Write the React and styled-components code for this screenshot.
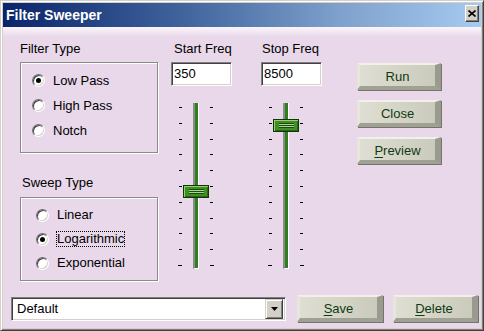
import React from "react";
import styled, { createGlobalStyle } from "styled-components";

const GlobalStyle = createGlobalStyle`
  html, body { margin: 0; padding: 0; }
  body {
    width: 484px; height: 331px; overflow: hidden;
    font-family: "Liberation Sans", Arial, sans-serif;
    font-size: 13px; color: #000;
  }
  * { box-sizing: border-box; }
`;

const Window = styled.div`
  width: 484px; height: 331px;
  display: flex; flex-direction: column;
  background: #d4d0c8;
  border: 1px solid; border-color: #d4d0c8 #404040 #404040 #d4d0c8;
  box-shadow: inset 1px 1px 0 #ffffff, inset -1px -1px 0 #808080;
  padding: 2px;
`;

const TitleBar = styled.div`
  height: 24px; flex: none;
  display: flex; align-items: flex-start;
  padding: 0 2px 0 3px;
  background: linear-gradient(90deg, #0a246a 0%, #4468a0 40%, #7ea0cc 70%, #a6caf0 100%);
`;

const TitleText = styled.div`
  font-family: "Liberation Sans", Arial, sans-serif;
  font-weight: bold; font-size: 14px; line-height: 24px; color: #fff;
`;

const CloseButton = styled.div`
  margin-left: auto; margin-top: 2px;
  width: 14px; height: 17px;
  display: flex; align-items: center; justify-content: center;
  background: #d4d0c8;
  border: 1px solid; border-color: #ffffff #404040 #404040 #ffffff;
  box-shadow: inset -1px -1px 0 #808080;
`;

const Body = styled.div`
  flex: 1; display: flex; flex-direction: column;
  background: linear-gradient(180deg, #fbf6fb 0px, #e8d8ea 10px, #e8d8ea 100%);
  padding: 14px 3px 6px 8px;
`;

const TopRow = styled.div`
  display: flex; align-items: flex-start; margin-left: 9px;
`;

const LeftCol = styled.div`
  width: 138px; display: flex; flex-direction: column;
`;

const Label = styled.div`
  font-size: 13px; line-height: 15px; height: 15px; white-space: nowrap;
  margin-left: ${p => p.$indent || 0}px;
  margin-top: ${p => p.$top || 0}px;
`;

const GroupBox = styled.div`
  margin-top: ${p => p.$top}px;
  height: ${p => p.$h}px;
  border: 1px solid #8c8a8c;
  box-shadow: inset 1px 1px 0 #ffffff, 1px 1px 0 #ffffff;
  padding: 5px 0 0 ${p => p.$pad}px;
  display: flex; flex-direction: column;
`;

const RadioRow = styled.div`
  height: ${p => p.$h}px; display: flex; align-items: center; gap: 7px;
`;

const RadioCircle = styled.div`
  position: relative; flex: none;
  width: 13px; height: 13px; border-radius: 50%;
  background: #fff;
  border: 1px solid; border-color: #707070 #ffffff #ffffff #707070;
  box-shadow: inset 1px 1px 0 #404040, inset -1px -1px 0 #d4d0c8;
  &::after {
    content: ""; display: ${p => (p.$on ? "block" : "none")};
    position: absolute; left: 3px; top: 3px; width: 5px; height: 5px;
    border-radius: 50%; background: #000;
  }
`;

const RadioText = styled.span`
  font-size: 13px; line-height: 13px; padding: 0 0 1px 0;
  border: 1px ${p => (p.$focus ? "dotted #000" : "solid transparent")};
  white-space: nowrap;
`;

const FreqCol = styled.div`
  width: 61px; margin-left: ${p => p.$gap}px;
  display: flex; flex-direction: column;
`;

const Field = styled.div`
  background: #fff;
  border: 1px solid; border-color: #808080 #ffffff #ffffff #808080;
  box-shadow: inset 1px 1px 0 #404040, inset -1px -1px 0 #d4d0c8;
  display: flex; align-items: center;
  font-size: 13px; white-space: nowrap;
`;

const FreqInput = styled(Field)`
  margin-top: 6px; height: 24px; padding-left: 2px; padding-bottom: 1px;
`;

const Slider = styled.div`
  position: relative; margin-top: 17px; margin-left: 7px;
  height: 166px; width: 36px; display: flex;
`;

const Ticks = styled.div`
  width: 4px; height: 100%;
  display: flex; flex-direction: column; justify-content: space-between;
  align-items: ${p => (p.$side === "left" ? "flex-end" : "flex-start")};
  padding: 4px 0 3px;
  margin-left: ${p => (p.$side === "left" ? 0 : 11)}px;
`;

const Tick = styled.div`
  height: 1px; width: ${p => (p.$long ? 4 : 3)}px; background: #000;
`;

const Track = styled.div`
  margin-left: 11px; width: 6px; height: 100%;
  background: #2f7f1f;
  border-left: 2px solid #8a8a8a; border-right: 1px solid #ffffff;
  border-bottom: 1px solid #ffffff;
`;

const Thumb = styled.div`
  position: absolute; left: 5px; width: 26px; height: 13px;
  background: #3f8f22;
  border: 1px solid #123408;
  box-shadow: inset 1px 1px 0 #92d06c, inset -1px -1px 0 #28641a;
  &::after {
    content: ""; position: absolute; left: 5px; top: 3px; width: 15px; height: 5px;
    background: repeating-linear-gradient(180deg, #1b4710 0 1px, #a5d888 1px 2px);
  }
`;

const ButtonCol = styled.div`
  margin-left: 35px; padding-top: 22px;
  display: flex; flex-direction: column; gap: 10px;
`;

const BevelButton = styled.div`
  width: ${p => p.$w || 84}px; height: 27px; flex: none;
  margin-left: ${p => p.$gap || 0}px;
  display: flex; align-items: center; justify-content: center;
  background: linear-gradient(90deg, #dedfd2 0%, #d2d3c5 60%, #cacbbd 100%);
  border-style: solid; border-width: 2px 6px 4px 3px;
  border-color: #f1f1ea #9a9a8e #a0a094 #e6e6dc;
  box-shadow: 1px 1px 0 #74746a;
  font-size: 13px; color: #0f3a12; padding-top: 1px;
  u { text-decoration: underline; text-underline-offset: 2px; }
`;

const BottomRow = styled.div`
  margin-top: auto; display: flex; align-items: center;
`;

const Combo = styled(Field)`
  width: 275px; height: 24px; padding: 0 2px 0 5px; justify-content: space-between;
`;

const DropButton = styled.div`
  width: 18px; height: 20px;
  display: flex; align-items: center; justify-content: center;
  background: #d4d0c8;
  border: 1px solid; border-color: #d4d0c8 #404040 #404040 #d4d0c8;
  box-shadow: inset 1px 1px 0 #ffffff, inset -1px -1px 0 #808080;
`;

const filterTypes = [
  { label: "Low Pass", on: true },
  { label: "High Pass" },
  { label: "Notch" },
];
const sweepTypes = [
  { label: "Linear" },
  { label: "Logarithmic", on: true, focus: true },
  { label: "Exponential" },
];
const freqs = [
  { label: "Start Freq", value: "350", indent: 3, gap: 13, pos: 0.535 },
  { label: "Stop Freq", value: "8500", indent: 1, gap: 29, pos: 0.117 },
];

function RadioGroup({ items, rowH, pad, top, h }) {
  return (
    <GroupBox $top={top} $h={h} $pad={pad}>
      {items.map(it => (
        <RadioRow key={it.label} $h={rowH}>
          <RadioCircle $on={it.on} />
          <RadioText $focus={it.focus}>{it.label}</RadioText>
        </RadioRow>
      ))}
    </GroupBox>
  );
}

function VSlider({ pos }) {
  const ticks = Array.from({ length: 11 }, (_, i) => i);
  const top = 4 + pos * 158 - 6.5;
  return (
    <Slider>
      <Ticks $side="left">{ticks.map(i => <Tick key={i} $long={i === 10} />)}</Ticks>
      <Track />
      <Ticks $side="right">{ticks.map(i => <Tick key={i} $long={i === 10} />)}</Ticks>
      <Thumb style={{ top: `${top}px` }} />
    </Slider>
  );
}

export default function App() {
  return (
    <>
      <GlobalStyle />
      <Window>
        <TitleBar>
          <TitleText>Filter Sweeper</TitleText>
          <CloseButton>
            <svg width="8" height="7" viewBox="0 0 8 7">
              <path d="M0.5 0.5 L7.5 6.5 M7.5 0.5 L0.5 6.5" stroke="#000" strokeWidth="1.6" />
            </svg>
          </CloseButton>
        </TitleBar>
        <Body>
          <TopRow>
            <LeftCol>
              <Label>Filter Type</Label>
              <RadioGroup items={filterTypes} rowH={25} pad={11} top={6} h={91} />
              <Label $indent={2} $top={22}>Sweep Type</Label>
              <RadioGroup items={sweepTypes} rowH={24} pad={15} top={7} h={84} />
            </LeftCol>
            {freqs.map(f => (
              <FreqCol key={f.label} $gap={f.gap}>
                <Label $indent={f.indent}>{f.label}</Label>
                <FreqInput>{f.value}</FreqInput>
                <VSlider pos={f.pos} />
              </FreqCol>
            ))}
            <ButtonCol>
              <BevelButton>Run</BevelButton>
              <BevelButton>Close</BevelButton>
              <BevelButton><u>P</u>review</BevelButton>
            </ButtonCol>
          </TopRow>
          <BottomRow>
            <Combo>
              <span>Default</span>
              <DropButton>
                <svg width="7" height="4" viewBox="0 0 7 4">
                  <path d="M0 0 H7 L3.5 4 Z" fill="#000" />
                </svg>
              </DropButton>
            </Combo>
            <BevelButton $w={86} $gap={11}><u>S</u>ave</BevelButton>
            <BevelButton $w={85} $gap={10}><u>D</u>elete</BevelButton>
          </BottomRow>
        </Body>
      </Window>
    </>
  );
}
